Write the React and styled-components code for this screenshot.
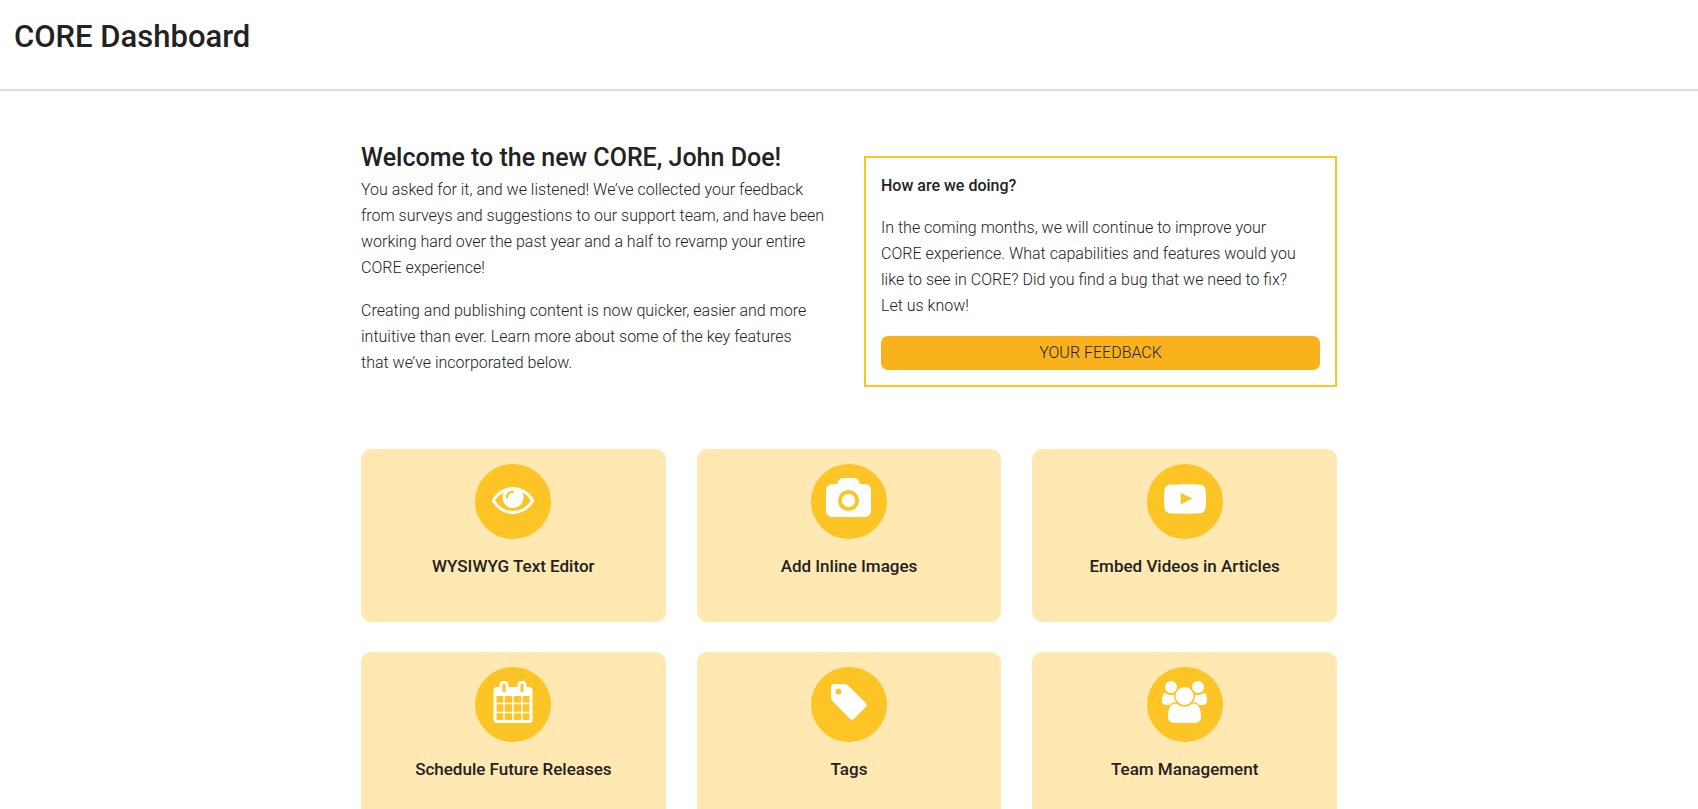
import React from "react";
import styled, { createGlobalStyle } from "styled-components";

const GlobalStyle = createGlobalStyle`
  *, *::before, *::after { box-sizing: border-box; }
  body {
    margin: 0;
    background: #ffffff;
    color: #222222;
    font-family: Roboto, "Liberation Sans", sans-serif;
    font-size: 16px;
    font-weight: 300;
    line-height: 26px;
  }
`;

const Header = styled.header`
  padding: 18px 14px 34px;
  border-bottom: 2px solid #dedede;
`;

const PageTitle = styled.h1`
  margin: 0;
  font-size: 31px;
  font-weight: 500;
  line-height: 37px;
`;

const Main = styled.main`
  max-width: 1006px;
  margin: 0 auto;
  padding: 52px 15px 30px;
`;

const Intro = styled.div`
  display: grid;
  grid-template-columns: repeat(auto-fit, minmax(min(400px, 100%), 1fr));
  gap: 30px;
  align-items: start;
  margin-bottom: 62px;
`;

const WelcomeTitle = styled.h2`
  margin: 0 0 4px;
  font-size: 25px;
  font-weight: 500;
  line-height: 30px;
`;

const Paragraph = styled.p`
  margin: 0 0 17px;

  &:last-child {
    margin-bottom: 0;
  }
`;

const FeedbackBox = styled.section`
  margin-top: 13px;
  padding: 15px;
  border: 2px solid #fdc426;
`;

const Subheading = styled.h3`
  margin: 0 0 16px;
  font-size: 16px;
  font-weight: 500;
  line-height: 26px;
`;

const FeedbackButton = styled.button`
  display: block;
  width: 100%;
  height: 34px;
  padding: 0 15px;
  border: 0;
  border-radius: 7px;
  background: #fab21c;
  color: #222222;
  font: inherit;
  text-transform: uppercase;
  cursor: pointer;
`;

const FeatureGrid = styled.div`
  display: grid;
  grid-template-columns: repeat(auto-fit, minmax(min(260px, 100%), 1fr));
  gap: 30px 31px;
`;

const FeatureCard = styled.article`
  display: flex;
  flex-direction: column;
  align-items: center;
  min-height: 173px;
  padding: 15px;
  border-radius: 10px;
  background: #ffe8b1;
  text-align: center;
`;

const IconCircle = styled.div`
  display: flex;
  justify-content: center;
  width: 76px;
  height: 75px;
  padding-top: 14px;
  border-radius: 50%;
  background: #fdc426;
`;

const Icon = styled.svg`
  flex: none;
  width: ${(p) => (p.$wide ? 45 : 42)}px;
  height: 42px;
  fill: #ffffff;
`;

const FeatureTitle = styled.h3`
  margin: 14px 0 0;
  font-size: 17px;
  font-weight: 500;
  line-height: 26px;
`;

const features = [
  {
    title: "WYSIWYG Text Editor",
    viewBox: "0 0 1792 1792",
    path: "M1664 960q-152-236-381-353 61 104 61 225 0 185-131.5 316.5t-316.5 131.5-316.5-131.5-131.5-316.5q0-121 61-225-229 117-381 353 133 205 333.5 326.5t434.5 121.5 434.5-121.5 333.5-326.5zm-720-384q0-20-14-34t-34-14q-125 0-214.5 89.5t-89.5 214.5q0 20 14 34t34 14 34-14 14-34q0-86 61-147t147-61q20 0 34-14t14-34zm848 384q0 34-20 69-140 230-376.5 368.5t-499.5 138.5-499.5-139-376.5-368q-20-35-20-69t20-69q140-229 376.5-368t499.5-139 499.5 139 376.5 368q20 35 20 69z",
  },
  {
    title: "Add Inline Images",
    wide: true,
    viewBox: "-64 0 1920 1792",
    path: "M896 672q119 0 203.5 84.5t84.5 203.5-84.5 203.5-203.5 84.5-203.5-84.5-84.5-203.5 84.5-203.5 203.5-84.5zm704-416q106 0 181 75t75 181v896q0 106-75 181t-181 75h-1408q-106 0-181-75t-75-181v-896q0-106 75-181t181-75h224l51-136q19-49 69.5-84.5t103.5-35.5h512q53 0 103.5 35.5t69.5 84.5l51 136h224zm-704 1152q185 0 316.5-131.5t131.5-316.5-131.5-316.5-316.5-131.5-316.5 131.5-131.5 316.5 131.5 316.5 316.5 131.5z",
  },
  {
    title: "Embed Videos in Articles",
    viewBox: "0 0 1792 1792",
    path: "M711 1128l484-250-484-253v503zm185-862q168 0 324.5 4.5t229.5 9.5l73 4q1 0 17 1.5t23 3 23.5 4.5 28.5 8 28 13 31 19.5 29 26.5q6 6 15.5 18.5t29 58.5 26.5 101q8 64 12.5 136.5t5.5 113.5v176q1 145-18 290-7 55-25 99.5t-32 61.5l-14 17q-14 15-29 26.5t-31 19-28 12.5-28.5 8-24 4.5-23 3-16.5 1.5q-251 19-627 19-207-2-359.5-6.5t-200.5-7.5l-49-4-36-4q-36-5-54.5-10t-51-21-56.5-41q-6-6-15.5-18.5t-29-58.5-26.5-101q-8-64-12.5-136.5t-5.5-113.5v-176q-1-145 18-290 7-55 25-99.5t32-61.5l14-17q14-15 29-26.5t31-19.5 28-13 28.5-8 23.5-4.5 23-3 17-1.5q251-18 627-18z",
  },
  {
    title: "Schedule Future Releases",
    viewBox: "0 0 1792 1792",
    path: "M192 1664h288v-288h-288v288zm352 0h320v-288h-320v288zm-352-352h288v-320h-288v320zm352 0h320v-320h-320v320zm-352-384h288v-288h-288v288zm736 736h320v-288h-320v288zm-384-736h320v-288h-320v288zm768 736h288v-288h-288v288zm-384-352h320v-320h-320v320zm-352-864v-288q0-13-9.5-22.5t-22.5-9.5h-64q-13 0-22.5 9.5t-9.5 22.5v288q0 13 9.5 22.5t22.5 9.5h64q13 0 22.5-9.5t9.5-22.5zm736 864h288v-320h-288v320zm-384-384h320v-288h-320v288zm384 0h288v-288h-288v288zm32-480v-288q0-13-9.5-22.5t-22.5-9.5h-64q-13 0-22.5 9.5t-9.5 22.5v288q0 13 9.5 22.5t22.5 9.5h64q13 0 22.5-9.5t9.5-22.5zm384-64v1280q0 52-38 90t-90 38h-1408q-52 0-90-38t-38-90v-1280q0-52 38-90t90-38h128v-96q0-66 47-113t113-47h64q66 0 113 47t47 113v96h384v-96q0-66 47-113t113-47h64q66 0 113 47t47 113v96h128q52 0 90 38t38 90z",
  },
  {
    title: "Tags",
    viewBox: "0 0 1792 1792",
    path: "M576 448q0-53-37.5-90.5t-90.5-37.5-90.5 37.5-37.5 90.5 37.5 90.5 90.5 37.5 90.5-37.5 37.5-90.5zm1067 576q0 53-37 90l-491 492q-39 37-91 37-53 0-90-37l-715-716q-38-37-64.5-101t-26.5-117v-416q0-52 38-90t90-38h416q53 0 117 26.5t102 64.5l715 714q37 39 37 91z",
  },
  {
    title: "Team Management",
    wide: true,
    viewBox: "0 0 1920 1792",
    path: "M593 896q-162 5-265 128h-134q-82 0-138-40.5t-56-118.5q0-353 124-353 6 0 43.5 21t97.5 42.5 119 21.5q67 0 133-23-5 37-5 66 0 139 81 256zm1071 637q0 120-73 189.5t-194 69.5h-874q-121 0-194-69.5t-73-189.5q0-53 3.5-103.5t14-109 26.5-108.5 43-97.5 62-81 85.5-53.5 111.5-20q10 0 43 21.5t73 48 107 48 135 21.5 135-21.5 107-48 73-48 43-21.5q61 0 111.5 20t85.5 53.5 62 81 43 97.5 26.5 108.5 14 109 3.5 103.5zm-1024-1277q0 106-75 181t-181 75-181-75-75-181 75-181 181-75 181 75 75 181zm704 384q0 159-112.5 271.5t-271.5 112.5-271.5-112.5-112.5-271.5 112.5-271.5 271.5-112.5 271.5 112.5 112.5 271.5zm576 225q0 78-56 118.5t-138 40.5h-134q-103-123-265-128 81-117 81-256 0-29-5-66 66 23 133 23 59 0 119-21.5t97.5-42.5 43.5-21q124 0 124 353zm-128-609q0 106-75 181t-181 75-181-75-75-181 75-181 181-75 181 75 75 181z",
  },
];

function Feature({ title, path, viewBox, wide }) {
  return (
    <FeatureCard>
      <IconCircle>
        <Icon viewBox={viewBox} $wide={wide} aria-hidden="true">
          <path d={path} />
        </Icon>
      </IconCircle>
      <FeatureTitle>{title}</FeatureTitle>
    </FeatureCard>
  );
}

export default function App() {
  return (
    <>
      <GlobalStyle />
      <Header>
        <PageTitle>CORE Dashboard</PageTitle>
      </Header>
      <Main>
        <Intro>
          <section>
            <WelcomeTitle>Welcome to the new CORE, John Doe!</WelcomeTitle>
            <Paragraph>
              You asked for it, and we listened! We’ve collected your feedback
              from surveys and suggestions to our support team, and have been
              working hard over the past year and a half to revamp your entire
              CORE experience!
            </Paragraph>
            <Paragraph>
              Creating and publishing content is now quicker, easier and more
              intuitive than ever. Learn more about some of the key features
              that&nbsp;we’ve incorporated below.
            </Paragraph>
          </section>
          <FeedbackBox>
            <Subheading>How are we doing?</Subheading>
            <Paragraph>
              In the coming months, we will continue to improve your
              CORE&nbsp;experience. What capabilities and features would you
              like to see in CORE? Did you find a bug that we need to fix?
              Let&nbsp;us&nbsp;know!
            </Paragraph>
            <FeedbackButton type="button">Your Feedback</FeedbackButton>
          </FeedbackBox>
        </Intro>
        <FeatureGrid>
          {features.map((feature) => (
            <Feature key={feature.title} {...feature} />
          ))}
        </FeatureGrid>
      </Main>
    </>
  );
}
